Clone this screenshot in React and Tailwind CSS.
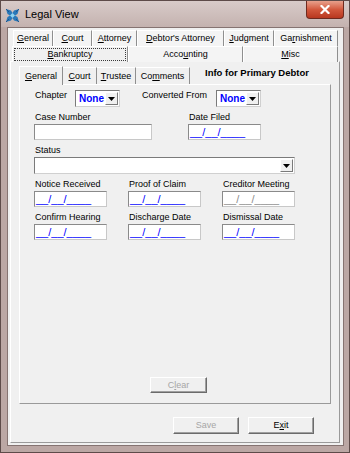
import React from 'react';

const U = ({ children }) => <span className="underline underline-offset-1">{children}</span>;

const TopTab = ({ className = '', children }) => (
  <div className={`flex items-center justify-center h-[16px] bg-[#f4f4f4] border-t border-l border-r border-t-white border-l-white border-r-[#8f8f8f] text-[9px] leading-[11px] text-black ${className}`}>
    {children}
  </div>
);

const TextBox = ({ className = '', children }) => (
  <div className={`h-[16px] bg-white border border-t-[#8a8a8a] border-l-[#8a8a8a] border-b-[#c8c8c8] border-r-[#c8c8c8] flex items-center px-[1px] overflow-hidden ${className}`}>
    {children}
  </div>
);

const DateBox = ({ gray }) => (
  <TextBox className="w-[73px]">
    <span className={`text-[11px] leading-[12px] -mt-[1px] ${gray ? 'text-[#8c8c8c]' : 'text-[#0000ff]'}`}>__/__/____</span>
  </TextBox>
);

const DropButton = () => (
  <div className="w-[13px] h-full bg-[#f0f0f0] border border-t-white border-l-white border-b-[#7a7a7a] border-r-[#7a7a7a] flex items-center justify-center">
    <svg width="7" height="4" viewBox="0 0 7 4">
      <path d="M0 0h7L3.5 4z" fill="#000" />
    </svg>
  </div>
);

const Combo = ({ className = '', children }) => (
  <div className={`h-[17px] bg-white border border-t-[#7a7a7a] border-l-[#7a7a7a] border-b-[#d0d0d0] border-r-[#d0d0d0] flex items-stretch p-[1px] ${className}`}>
    <div className="flex-1 flex items-center pl-[2px] text-[10px] leading-[12px] font-bold text-[#0000ff]">{children}</div>
    <DropButton />
  </div>
);

const Label = ({ className = '', children }) => (
  <div className={`h-[13px] text-[9px] leading-[13px] text-black ${className}`}>{children}</div>
);

const Button = ({ className = '', disabled, children }) => (
  <div className={`flex items-center justify-center bg-[#f0f0f0] border border-t-white border-l-white border-b-[#6b6b6b] border-r-[#6b6b6b] shadow-[inset_-1px_-1px_0_#a0a0a0] text-[9px] leading-[11px] ${disabled ? 'text-[#a6a6a6]' : 'text-black'} ${className}`}>
    {children}
  </div>
);

const AppIcon = () => (
  <svg width="15" height="15" viewBox="0 0 15 15">
    <path d="M1 1l5 1.5L7.5 5 9 2.5 14 1l-1.5 5L10 7.5l2.5 1.5L14 14l-5-1.5L7.5 10 6 12.5 1 14l1.5-5L5 7.5 2.5 6z" fill="#2a78b8" />
    <path d="M7.5 5L10 7.5 7.5 10 5 7.5z" fill="#8fd3f0" />
    <path d="M1 1l3 3M14 1l-3 3M1 14l3-3M14 14l-3-3" stroke="#1b5690" strokeWidth="1" />
  </svg>
);

export default function App() {
  return (
    <div className="w-[350px] h-[453px] bg-[#bba7a4] border border-[#5d4b49] flex flex-col font-['Liberation_Sans',Arial,sans-serif] select-none">
      {/* title bar */}
      <div className="h-[26px] flex items-center bg-gradient-to-b from-[#d8cbc9] to-[#c4b2af] relative">
        <div className="ml-[4px] mt-[2px]"><AppIcon /></div>
        <span className="ml-[5px] mt-[1px] text-[11px] text-black">Legal View</span>
        <div className="absolute right-[5px] top-0 w-[38px] h-[18px] rounded-b-[4px] border border-t-0 border-[#6e2a1f] bg-gradient-to-b from-[#e7a08c] via-[#d2583d] to-[#b8371f] flex items-center justify-center">
          <svg width="10" height="9" viewBox="0 0 10 9">
            <path d="M1.5 1l7 7M8.5 1l-7 7" stroke="#fff" strokeWidth="2.2" strokeLinecap="square" />
          </svg>
        </div>
      </div>

      {/* client area */}
      <div className="flex-1 ml-[6px] mr-[5px] mb-[6px] border border-[#857371] bg-[#f0f0f0] flex flex-col pt-[2px] pl-[2px] pr-[3px] pb-[2px]">
        {/* tab row 1 */}
        <div className="flex pl-[3px]">
          <TopTab className="w-[40px]"><U>G</U>eneral</TopTab>
          <TopTab className="w-[39px]"><U>C</U>ourt</TopTab>
          <TopTab className="w-[45px]"><U>A</U>ttorney</TopTab>
          <TopTab className="w-[87px]"><U>D</U>ebtor's Attorney</TopTab>
          <TopTab className="w-[50px]"><U>J</U>udgment</TopTab>
          <TopTab className="w-[64px]">Ga<U>r</U>nishment</TopTab>
        </div>
        {/* tab row 2 */}
        <div className="flex pl-[2px] relative z-10 -mb-px">
          <div className="w-[116px] h-[16px] bg-[#f0f0f0] border-t border-l border-r border-t-white border-l-white border-r-[#8f8f8f] p-[1px]">
            <div className="w-full h-full border border-dotted border-[#3a3a3a] flex items-center justify-center text-[9px] leading-[11px]">
              <U>B</U>ankruptcy
            </div>
          </div>
          <TopTab className="w-[115px]">Acco<U>u</U>nting</TopTab>
          <TopTab className="w-[95px]"><U>M</U>isc</TopTab>
        </div>

        {/* outer panel */}
        <div className="w-[330px] flex-1 border border-t-white border-l-white border-b-[#9a9a9a] border-r-[#9a9a9a] flex flex-col">
          {/* inner tabs */}
          <div className="flex items-end h-[22px] pl-[8px]">
            <div className="w-[44px] h-[19px] bg-[#f0f0f0] border-t border-l border-r border-t-white border-l-white border-r-[#8f8f8f] flex items-center justify-center text-[9px] leading-[11px] relative z-10 -mb-px">
              <U>G</U>eneral
            </div>
            <div className="w-[34px] h-[17px] border-t border-r border-t-white border-r-[#8f8f8f] flex items-center justify-center text-[9px] leading-[11px]"><U>C</U>ourt</div>
            <div className="w-[39px] h-[17px] border-t border-r border-t-white border-r-[#8f8f8f] flex items-center justify-center text-[9px] leading-[11px]"><U>T</U>rustee</div>
            <div className="w-[54px] h-[17px] border-t border-r border-t-white border-r-[#8f8f8f] flex items-center justify-center text-[9px] leading-[11px]">Co<U>m</U>ments</div>
            <div className="self-start mt-[5px] ml-[15px] text-[9.5px] leading-[12px] font-bold text-black">Info for Primary Debtor</div>
          </div>

          {/* inner panel */}
          <div className="ml-[8px] w-[312px] h-[320px] border border-t-white border-l-white border-b-[#9a9a9a] border-r-[#9a9a9a] flex flex-col pl-[14px]">
            {/* chapter row */}
            <div className="flex items-start mt-[5px] h-[17px]">
              <Label className="w-[41px] pl-[1px] -mt-[1px]">Chapter</Label>
              <Combo className="w-[45px]">None</Combo>
              <Label className="ml-[22px] w-[74px] -mt-[1px]">Converted From</Label>
              <Combo className="w-[45px]">None</Combo>
            </div>

            {/* case number / date filed */}
            <div className="flex mt-[4px]">
              <div className="flex flex-col w-[118px]">
                <Label className="pl-[1px]">Case Number</Label>
                <TextBox className="w-[118px]" />
              </div>
              <div className="flex flex-col ml-[36px]">
                <Label className="pl-[1px]">Date Filed</Label>
                <DateBox />
              </div>
            </div>

            {/* status */}
            <div className="flex flex-col mt-[4px]">
              <Label className="pl-[1px]">Status</Label>
              <Combo className="w-[261px]" />
            </div>

            {/* date rows */}
            <div className="grid grid-cols-[73px_73px_73px] gap-x-[21px] mt-[4px]">
              <div className="flex flex-col">
                <Label className="pl-[1px]">Notice Received</Label>
                <DateBox />
              </div>
              <div className="flex flex-col">
                <Label className="pl-[1px]">Proof of Claim</Label>
                <DateBox />
              </div>
              <div className="flex flex-col">
                <Label className="pl-[1px]">Creditor Meeting</Label>
                <DateBox gray />
              </div>
              <div className="flex flex-col mt-[4px]">
                <Label className="pl-[1px]">Confirm Hearing</Label>
                <DateBox />
              </div>
              <div className="flex flex-col mt-[4px]">
                <Label className="pl-[1px]">Discharge Date</Label>
                <DateBox />
              </div>
              <div className="flex flex-col mt-[4px]">
                <Label className="pl-[1px]">Dismissal Date</Label>
                <DateBox />
              </div>
            </div>

            <div className="flex-1" />
            <Button disabled className="ml-[116px] mb-[10px] w-[57px] h-[16px]">C<U>l</U>ear</Button>
          </div>

          {/* bottom buttons */}
          <div className="flex mt-[13px] ml-[162px] gap-[9px]">
            <Button disabled className="w-[66px] h-[17px]">Save</Button>
            <Button className="w-[66px] h-[17px]">E<U>x</U>it</Button>
          </div>
        </div>
      </div>
    </div>
  );
}
